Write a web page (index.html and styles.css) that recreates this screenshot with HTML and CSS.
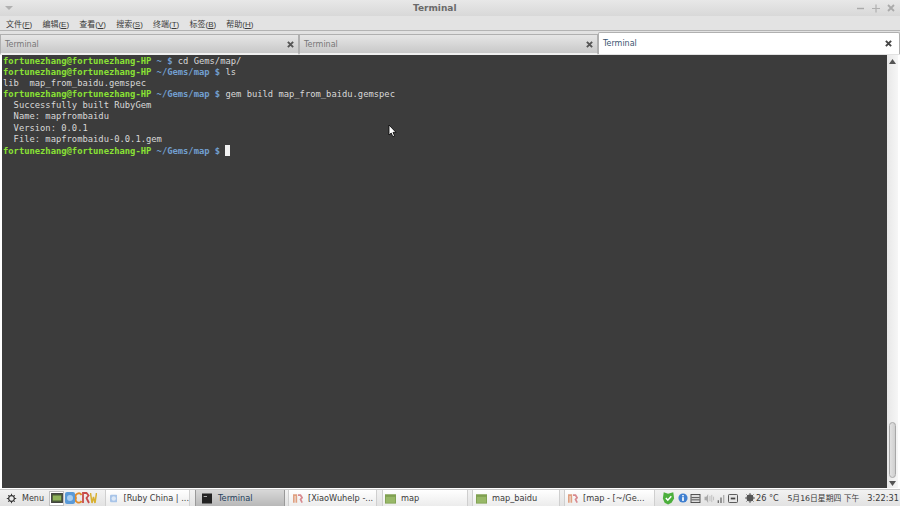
FILE: index.html
```html
<!DOCTYPE html>
<html lang="zh">
<head>
<meta charset="utf-8">
<title>Terminal</title>
<link rel="stylesheet" href="styles.css">
</head>
<body>
<div class="window">
  <header class="titlebar">
    <svg class="wm-menu" width="8" height="6" viewBox="0 0 8 6"><path d="M0 1h8L4 5z" fill="#b0b0b0"/></svg>
    <span class="title">Terminal</span>
    <div class="wm-buttons">
      <svg width="10" height="10" viewBox="0 0 10 10"><path d="M1 5.500h7" stroke="#aaa" stroke-width="1.400"/></svg>
      <svg width="10" height="10" viewBox="0 0 10 10"><path d="M1 5.500h8M5 1.500v8" stroke="#b0b0b0" stroke-width="1.200"/></svg>
      <svg width="10" height="10" viewBox="0 0 10 10"><path d="M2 2l6 6M8 2L2 8" stroke="#aaa" stroke-width="1.800"/></svg>
    </div>
  </header>
  <nav class="menubar">
    <span>文件(<u>F</u>)</span><span>编辑(<u>E</u>)</span><span>查看(<u>V</u>)</span><span>搜索(<u>S</u>)</span><span>终端(<u>T</u>)</span><span>标签(<u>B</u>)</span><span>帮助(<u>H</u>)</span>
  </nav>
  <div class="tabs">
    <div class="tab"><span>Terminal</span><svg class="x" width="7" height="7" viewBox="0 0 8 8"><path d="M1 1l6 6M7 1L1 7" stroke="#555" stroke-width="2.200"/></svg></div>
    <div class="tab"><span>Terminal</span><svg class="x" width="7" height="7" viewBox="0 0 8 8"><path d="M1 1l6 6M7 1L1 7" stroke="#555" stroke-width="2.200"/></svg></div>
    <div class="tab active"><span>Terminal</span><svg class="x" width="7" height="7" viewBox="0 0 8 8"><path d="M1 1l6 6M7 1L1 7" stroke="#444" stroke-width="2.200"/></svg></div>
  </div>
  <div class="content">
    <div class="terminal">
      <div class="line"><b class="g">fortunezhang@fortunezhang-HP</b> <b class="b">~ $</b> cd Gems/map/</div>
      <div class="line"><b class="g">fortunezhang@fortunezhang-HP</b> <b class="b">~/Gems/map $</b> ls</div>
      <div class="line">lib  map_from_baidu.gemspec</div>
      <div class="line"><b class="g">fortunezhang@fortunezhang-HP</b> <b class="b">~/Gems/map $</b> gem build map_from_baidu.gemspec</div>
      <div class="line">  Successfully built RubyGem</div>
      <div class="line">  Name: mapfrombaidu</div>
      <div class="line">  Version: 0.0.1</div>
      <div class="line">  File: mapfrombaidu-0.0.1.gem</div>
      <div class="line"><b class="g">fortunezhang@fortunezhang-HP</b> <b class="b">~/Gems/map $</b> <i class="cursor"></i></div>
    </div>
    <svg class="pointer" width="9" height="13" viewBox="0 0 9 13"><path d="M1 0v10l2.200-2 1.600 3.600 1.800-.8L5 7.400h3z" fill="#fff" stroke="#000" stroke-width=".8"/></svg>
    <div class="scrollbar">
      <svg class="arrow" width="7" height="5" viewBox="0 0 7 5"><path d="M3.500 0L7 5H0z" fill="#555"/></svg>
      <div class="thumb"></div>
      <svg class="arrow" width="7" height="5" viewBox="0 0 7 5"><path d="M0 0h7L3.500 5z" fill="#555"/></svg>
    </div>
  </div>
</div>
<footer class="panel">
  <div class="start">
    <svg width="11" height="11" viewBox="0 0 14 14"><circle cx="7" cy="7" r="3.600" fill="none" stroke="#333" stroke-width="1.500"/><path d="M7 1v2.500M7 10.500V13M1 7h2.500M10.500 7H13M2.800 2.800l1.800 1.800M9.400 9.400l1.800 1.800M2.800 11.200l1.800-1.800M9.400 4.600l1.800-1.800" stroke="#333" stroke-width="1.200"/></svg>
    <span>Menu</span>
  </div>
  <div class="quick">
    <span class="q-desktop"><svg width="12" height="10" viewBox="0 0 14 12"><rect x=".5" y=".5" width="13" height="11" fill="#4a5a3a" stroke="#333"/><rect x="2" y="3" width="10" height="6" fill="#8fb35a"/></svg></span>
    <svg class="q-blue" width="10" height="12" viewBox="0 0 10 12"><rect width="10" height="12" rx="2" fill="#5a9ad8"/><circle cx="5" cy="6" r="3" fill="#a8cdf0"/></svg>
    <svg width="7" height="12" viewBox="0 0 7 12"><path d="M6.500 3A3 3 0 0 0 1 6a3 3 0 0 0 5.500 3" fill="none" stroke="#e08a2a" stroke-width="1.800"/></svg>
    <svg width="8" height="12" viewBox="0 0 8 12"><path d="M1 11V1h3.500l2 2.500-2 2.500 2.500 5" fill="none" stroke="#c84a4a" stroke-width="1.800"/></svg>
    <svg width="7" height="12" viewBox="0 0 7 12"><path d="M.5 1l1.500 10L3.500 5 5 11l1.500-10" fill="none" stroke="#d8b030" stroke-width="1.500"/></svg>
  </div>
  <div class="task t-ruby"><svg width="10" height="11" viewBox="0 0 12 12"><rect width="12" height="12" rx="2" fill="#a8c4e8"/><circle cx="6" cy="6" r="3.500" fill="#dce8f6"/></svg><span>[Ruby China | ...</span></div>
  <div class="task t-term active"><svg width="10" height="11" viewBox="0 0 12 12"><rect width="12" height="12" fill="#222"/><path d="M2 3h4v1H2z" fill="#ccc"/></svg><span>Terminal</span></div>
  <div class="task t-xiao"><svg width="10" height="11" viewBox="0 0 12 12"><path d="M1 11V2h3v9" fill="none" stroke="#e0a080" stroke-width="2"/><path d="M6 2h3l2 3-2 2 2 4" fill="none" stroke="#d88a90" stroke-width="2"/></svg><span>[XiaoWuhelp -...</span></div>
  <div class="task t-map"><svg width="11" height="11" viewBox="0 0 13 12"><rect y="1" width="13" height="11" fill="#7fa050"/><rect x="1" y="4" width="11" height="7" fill="#98b868"/></svg><span>map</span></div>
  <div class="task t-baidu"><svg width="11" height="11" viewBox="0 0 13 12"><rect y="1" width="13" height="11" fill="#7fa050"/><rect x="1" y="4" width="11" height="7" fill="#98b868"/></svg><span>map_baidu</span></div>
  <div class="task t-mapg"><svg width="10" height="11" viewBox="0 0 12 12"><path d="M1 11V2h3v9" fill="none" stroke="#e0a080" stroke-width="2"/><path d="M6 2h3l2 3-2 2 2 4" fill="none" stroke="#d88a90" stroke-width="2"/></svg><span>[map - [~/Ge...</span></div>
  <div class="tray">
    <svg width="13" height="14" viewBox="0 0 15 15"><path d="M2 1l5 1.500L13 1l1 7-3 5-4 2-4-2-2-5z" fill="#4caf3c"/><path d="M4.500 7.500l2.200 2.500 4-4.500" fill="none" stroke="#fff" stroke-width="1.800"/></svg>
    <svg width="10" height="10" viewBox="0 0 12 12"><circle cx="6" cy="6" r="5.500" fill="#3f7fd0"/><rect x="5" y="5" width="2" height="4.500" fill="#fff"/><rect x="5" y="2.500" width="2" height="1.500" fill="#fff"/></svg>
    <svg width="11" height="9" viewBox="0 0 11 10"><rect x=".5" y=".5" width="10" height="9" fill="#ddd" stroke="#444"/><path d="M1 4h9M1 6.500h9" stroke="#444"/></svg>
    <svg width="11" height="9" viewBox="0 0 11 10"><path d="M0 3h2l2-3v10L2 7H0z" fill="#aaa"/><path d="M6 2v6M8 1v8M10 3v4" stroke="#bbb"/></svg>
    <svg width="8" height="9" viewBox="0 0 8 10"><path d="M1 10V7M4 10V4" stroke="#666" stroke-width="1.400"/><path d="M7 10V1" stroke="#aaa" stroke-width="1.400"/></svg>
    <svg width="10" height="9" viewBox="0 0 11 10"><rect x=".5" y=".5" width="10" height="9" rx="1" fill="#e6e6e6" stroke="#444"/><path d="M3 4h5v2H3z" fill="#444"/></svg>
    <span class="weather"><svg width="10" height="10" viewBox="0 0 11 11"><circle cx="5.500" cy="5.500" r="3.800" fill="#555"/><path d="M5.500 0v11M0 5.500h11M1.600 1.600l7.800 7.800M9.400 1.600l-7.800 7.800" stroke="#555"/></svg>26 °C</span>
    <span class="clock">5月16日星期四 下午</span>
    <span class="time">3:22:31</span>
  </div>
</footer>
</body>
</html>
```

FILE: styles.css
```css
* { box-sizing: border-box; }
html, body { margin: 0; padding: 0; }
body {
  width: 900px;
  height: 506px;
  overflow: hidden;
  display: flex;
  flex-direction: column;
  background: #e6e6e6;
  font-family: "Liberation Sans", "Noto Sans CJK SC", sans-serif;
  color: #333;
}
.window {
  height: 489px;
  display: flex;
  flex-direction: column;
  background: #e2e2e2;
}
.titlebar {
  height: 16px;
  flex: none;
  display: flex;
  align-items: center;
  justify-content: space-between;
  padding: 0 4px 0 5px;
  background: linear-gradient(#e8e8e8, #d8d8d8);
  position: relative;
}
.title {
  position: absolute;
  left: 413px;
  top: 2px;
  font: bold 9px/13px "DejaVu Sans", sans-serif;
  color: #6a6a6a;
}
.wm-buttons { display: flex; gap: 5px; margin-left: auto; }
.menubar {
  height: 15px;
  flex: none;
  display: flex;
  gap: 10.200px;
  align-items: center;
  padding: 0 0 0 6px;
  font-size: 8px;
  color: #3a3a3a;
  border-bottom: 1px solid #b4b4b4;
  background: #e3e3e3;
}
.tabs {
  height: 24px;
  flex: none;
  display: flex;
  align-items: stretch;
  padding-top: 1px;
}
.tab {
  width: 299px;
  height: 21px;
  margin-top: 2px;
  display: flex;
  align-items: center;
  justify-content: space-between;
  padding: 0 4px 0 4px;
  font: 8px "DejaVu Sans", sans-serif;
  color: #777;
  background: linear-gradient(#e6e6e6, #c8c8c8);
  border: 1px solid #b0b0b0;
  border-bottom: 2px solid #f0f0f0;
}
.tab.active {
  width: 302px;
  height: 22px;
  margin-top: 0;
  color: #3a5570;
  background: #fff;
  border-radius: 2px 2px 0 0;
  border-bottom: 0;
  padding: 0 7px 0 4px;
}
.content {
  flex: 1;
  min-height: 0;
  display: flex;
  position: relative;
  background: #fff;
  padding: 0 2px 1px 2px;
}
.terminal {
  flex: 1;
  padding: 0.700px 0 0 1px;
  background: #3c3c3c;
  color: #d8d8d8;
  font: 8.800px/11.150px "DejaVu Sans Mono", monospace;
  overflow: hidden;
}
.line { height: 11.150px; white-space: pre; }
.terminal b { font-weight: bold; }
.g { color: #8ae234; }
.b { color: #729fcf; }
.cursor {
  display: inline-block;
  width: 5px;
  height: 11px;
  background: #f2f2f2;
  vertical-align: -2px;
}
.pointer { position: absolute; left: 388px; top: 70px; }
.scrollbar {
  width: 11px;
  flex: none;
  display: flex;
  flex-direction: column;
  align-items: center;
  justify-content: space-between;
  padding: 4px 0 2px;
  background: linear-gradient(90deg, #e8e8e8, #f6f6f6);
}
.arrow { flex: none; }
.thumb {
  width: 7px;
  height: 56px;
  margin-top: auto;
  margin-bottom: 3px;
  border: 1px solid #a8a8a8;
  border-radius: 4px;
  background: linear-gradient(90deg, #e2e2e2, #cfcfcf);
}
.panel {
  height: 17px;
  flex: none;
  display: flex;
  align-items: stretch;
  background: linear-gradient(#f2f2f2, #e2e2e2);
  border-top: 1px solid #c8c8c8;
  font: 8.200px/15px "DejaVu Sans", "Noto Sans CJK SC", sans-serif;
  color: #3a3a3a;
}
.start {
  width: 49px;
  display: flex;
  align-items: center;
  gap: 5px;
  padding-left: 6px;
  flex: none;
  font-size: 8px;
}
.quick {
  width: 56px;
  flex: none;
  display: flex;
  align-items: center;
}
.q-desktop {
  display: flex;
  align-items: center;
  justify-content: center;
  width: 15px;
  height: 15px;
  background: #fff;
  border: 1px solid #c0c0c0;
}
.q-blue { margin-left: 1px; }
.task {
  display: flex;
  align-items: center;
  gap: 5px;
  padding-left: 4px;
  flex: none;
  overflow: hidden;
  white-space: nowrap;
  background: linear-gradient(#ffffff, #ececec);
  border: 1px solid #cfcfcf;
  border-width: 0 1px;
}
.task.active {
  background: linear-gradient(#d8d8d8, #b8b8b8);
  border-color: #999;
  color: #24405c;
}
.t-ruby { width: 85px; margin-right: 5px; padding-left: 4px; gap: 6px; }
.t-term { width: 90px; margin-right: 3px; padding-left: 6px; gap: 6px; }
.t-xiao { width: 89px; margin-right: 5px; }
.t-map { width: 86px; margin-right: 4px; padding-left: 2px; }
.t-baidu { width: 88px; margin-right: 4px; padding-left: 3px; }
.t-mapg { width: 91px; padding-left: 3px; }
.tray {
  flex: 1;
  display: flex;
  align-items: center;
  gap: 2.600px;
  padding-left: 7px;
  white-space: nowrap;
}
.weather { display: flex; align-items: center; gap: 1px; margin-left: 4.400px; }
.clock { margin-left: 6px; font-size: 7.800px; }
.time { margin-left: 5.400px; }
```
